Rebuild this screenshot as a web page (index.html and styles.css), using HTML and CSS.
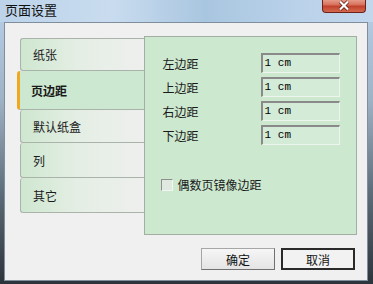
FILE: index.html
```html
<!DOCTYPE html>
<html lang="zh-CN">

<head>
    <meta charset="UTF-8">
    <meta name="viewport" content="width=device-width, initial-scale=1.0">
    <title>页面设置</title>
    <link rel="stylesheet" href="styles.css">
</head>

<body>
    <div class="window">
        <div class="titlebar">
            <span class="title">页面设置</span>
            <div class="close">
                <svg width="14" height="11" viewBox="0 0 14 11">
                    <path d="M3 1.5 L11 9.5 M11 1.5 L3 9.5" stroke="#5a1a10" stroke-width="3.6" />
                    <path d="M3 1.5 L11 9.5 M11 1.5 L3 9.5" stroke="#ffffff" stroke-width="2.2" />
                </svg>
            </div>
        </div>
        <div class="client">
            <div class="main">
                <div class="tabs">
                    <div class="tab t1">纸张</div>
                    <div class="tab t2 active">页边距</div>
                    <div class="tab t3">默认纸盒</div>
                    <div class="tab t4">列</div>
                    <div class="tab t5">其它</div>
                </div>
                <div class="panel">
                    <div class="rows">
                        <div class="row">
                            <span class="label">左边距</span>
                            <div class="field">1 cm</div>
                        </div>
                        <div class="row">
                            <span class="label">上边距</span>
                            <div class="field">1 cm</div>
                        </div>
                        <div class="row">
                            <span class="label">右边距</span>
                            <div class="field">1 cm</div>
                        </div>
                        <div class="row">
                            <span class="label">下边距</span>
                            <div class="field">1 cm</div>
                        </div>
                    </div>
                    <label class="check">
                        <span class="box"></span>
                        <span>偶数页镜像边距</span>
                    </label>
                </div>
            </div>
            <div class="buttons">
                <button class="btn">确定</button>
                <button class="btn default">取消</button>
            </div>
        </div>
    </div>
</body>

</html>
```

FILE: styles.css
```css
body {
    margin: 0;
    font-family: "Noto Sans CJK SC", "Noto Sans", sans-serif;
    font-size: 12px;
    color: #1a1a1a;
}

.window {
    width: 373px;
    height: 284px;
    box-sizing: border-box;
    padding: 0 5px 3px 4px;
    display: flex;
    flex-direction: column;
    background: linear-gradient(to bottom, #b9d0e8 0%, #9fb3c6 35%, #5a6875 70%, #2c333b 100%);
}

.titlebar {
    height: 22px;
    margin: 0 -5px 0 -4px;
    padding: 0 7px 0 5px;
    display: flex;
    justify-content: space-between;
    align-items: flex-start;
    background: linear-gradient(to right, #bcd3ea 0%, #c9dcef 30%, #a9c6e0 55%, #bad2ea 80%, #c2d7ec 100%);
}

.title {
    font-size: 13px;
    line-height: 20px;
    color: #111;
}

.close {
    width: 44px;
    height: 14px;
    margin-top: -1px;
    box-sizing: border-box;
    border: 1px solid #6b2218;
    border-top: none;
    border-radius: 0 0 4px 4px;
    background: linear-gradient(to bottom, #e8a592 0%, #d6705b 45%, #c0412c 55%, #d4694e 100%);
    display: flex;
    justify-content: center;
    align-items: center;
}

.client {
    flex: 1;
    background: #f0f0f0;
    border: 1px solid #7f8e9c;
    padding: 13px 10px 0 12px;
    display: flex;
    flex-direction: column;
}

.main {
    display: flex;
}

.tabs {
    width: 127px;
    margin-top: 2px;
    display: flex;
    flex-direction: column;
}

.tab {
    margin-left: 3px;
    box-sizing: border-box;
    border: 1px solid #aab3aa;
    border-right: none;
    border-top: none;
    border-radius: 3px 0 0 3px;
    padding-left: 12px;
    display: flex;
    align-items: center;
    background: linear-gradient(to right, #cfe7d0 0%, #e4eee4 45%, #eeefee 100%);
}

.t1 {
    height: 33px;
    border-top: 1px solid #aab3aa;
}

.t2 {
    height: 39px;
}

.t3 {
    height: 33px;
}

.t4 {
    height: 35px;
}

.t5 {
    height: 35px;
}

.tab.active {
    margin-left: 0;
    border-left: 3px solid #f0a820;
    padding-left: 11px;
    font-weight: bold;
    background: #cde8d0;
}

.panel {
    width: 214px;
    height: 199px;
    box-sizing: border-box;
    background: #cce8cf;
    border: 1px solid #a2aea4;
    padding: 16px 0 0 18px;
}

.rows {
    display: flex;
    flex-direction: column;
    gap: 4px;
}

.row {
    display: flex;
    align-items: center;
    height: 20px;
}

.label {
    width: 98px;
}

.field {
    width: 79px;
    height: 20px;
    box-sizing: border-box;
    border-top: 2px solid #8a8a8a;
    border-left: 2px solid #8a8a8a;
    border-bottom: 1px solid #eef4ee;
    border-right: 1px solid #eef4ee;
    background: #d4ebd7;
    font-family: "Liberation Mono", monospace;
    font-size: 11px;
    line-height: 17px;
    padding-left: 2px;
    color: #000;
}

.check {
    display: flex;
    align-items: center;
    gap: 5px;
    margin-top: 31px;
    margin-left: -2px;
}

.box {
    width: 12px;
    height: 12px;
    box-sizing: border-box;
    border-top: 1px solid #8f8f8f;
    border-left: 1px solid #8f8f8f;
    border-bottom: 1px solid #f4f4f4;
    border-right: 1px solid #f4f4f4;
    background: #dfe9df;
}

.buttons {
    display: flex;
    justify-content: flex-end;
    gap: 6px;
    margin-top: 13px;
    padding-right: 2px;
}

.btn {
    width: 74px;
    height: 22px;
    font-family: inherit;
    font-size: 12px;
    color: #111;
    background: linear-gradient(to bottom, #f6f6f6, #e4e4e4);
    border: 1px solid #a6a6a6;
    border-right-color: #707070;
    border-bottom-color: #707070;
    padding: 0;
}

.btn.default {
    border: 2px solid #2a2a2a;
    background: #f2f2f2;
}
```
